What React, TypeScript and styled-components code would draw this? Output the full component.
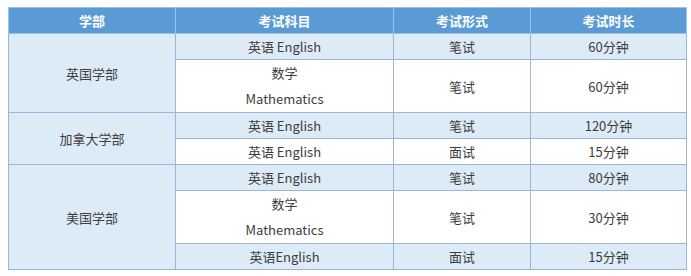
import { FC } from "react";
import styled, { createGlobalStyle } from "styled-components";

const GlobalStyle = createGlobalStyle`
  body {
    margin: 0;
    background: #ffffff;
    font-family: "Noto Sans CJK SC", "Noto Sans", sans-serif;
  }
`;

const Page = styled.div`
  padding: 7px 0 0 8px;
`;

const Table = styled.table`
  border-collapse: collapse;
  table-layout: fixed;
  width: 678px;
  font-size: 13px;
  color: #3d3d3d;
`;

const HeadCell = styled.th`
  background: #5b9bd5;
  color: #ffffff;
  font-weight: bold;
  height: 25px;
  padding: 0;
  line-height: 24px;
  text-align: center;
  border: 1px solid #9cc2e5;
`;

const Cell = styled.td<{ shaded?: boolean }>`
  background: ${({ shaded }) => (shaded ? "#ddebf7" : "#ffffff")};
  height: 25px;
  padding: 0;
  line-height: 25px;
  text-align: center;
  vertical-align: middle;
  border: 1px solid #9bb5d6;
`;

const SubjectLine = styled.div<{ tall?: boolean }>`
  line-height: ${({ tall }) => (tall ? "26px" : "25px")};
`;

type Exam = { subject: string[]; form: string; time: string };

const groups: { school: string; exams: Exam[] }[] = [
  {
    school: "英国学部",
    exams: [
      { subject: ["英语 English"], form: "笔试", time: "60分钟" },
      { subject: ["数学", "Mathematics"], form: "笔试", time: "60分钟" },
    ],
  },
  {
    school: "加拿大学部",
    exams: [
      { subject: ["英语 English"], form: "笔试", time: "120分钟" },
      { subject: ["英语 English"], form: "面试", time: "15分钟" },
    ],
  },
  {
    school: "美国学部",
    exams: [
      { subject: ["英语 English"], form: "笔试", time: "80分钟" },
      { subject: ["数学", "Mathematics"], form: "笔试", time: "30分钟" },
      { subject: ["英语English"], form: "面试", time: "15分钟" },
    ],
  },
];

const App: FC = () => {
  let rowIndex = 0;

  return (
    <Page>
      <GlobalStyle />
      <Table>
        <colgroup>
          <col style={{ width: 167 }} />
          <col style={{ width: 218 }} />
          <col style={{ width: 137 }} />
          <col style={{ width: 156 }} />
        </colgroup>
        <thead>
          <tr>
            <HeadCell>学部</HeadCell>
            <HeadCell>考试科目</HeadCell>
            <HeadCell>考试形式</HeadCell>
            <HeadCell>考试时长</HeadCell>
          </tr>
        </thead>
        <tbody>
          {groups.map((group) =>
            group.exams.map((exam, i) => {
              const shaded = rowIndex++ % 2 === 0;
              return (
                <tr key={group.school + i}>
                  {i === 0 && (
                    <Cell shaded rowSpan={group.exams.length}>
                      {group.school}
                    </Cell>
                  )}
                  <Cell shaded={shaded}>
                    {exam.subject.map((line, j) => (
                      <SubjectLine key={j} tall={exam.subject.length > 1}>
                        {line}
                      </SubjectLine>
                    ))}
                  </Cell>
                  <Cell shaded={shaded}>{exam.form}</Cell>
                  <Cell shaded={shaded}>{exam.time}</Cell>
                </tr>
              );
            })
          )}
        </tbody>
      </Table>
    </Page>
  );
};

export default App;
